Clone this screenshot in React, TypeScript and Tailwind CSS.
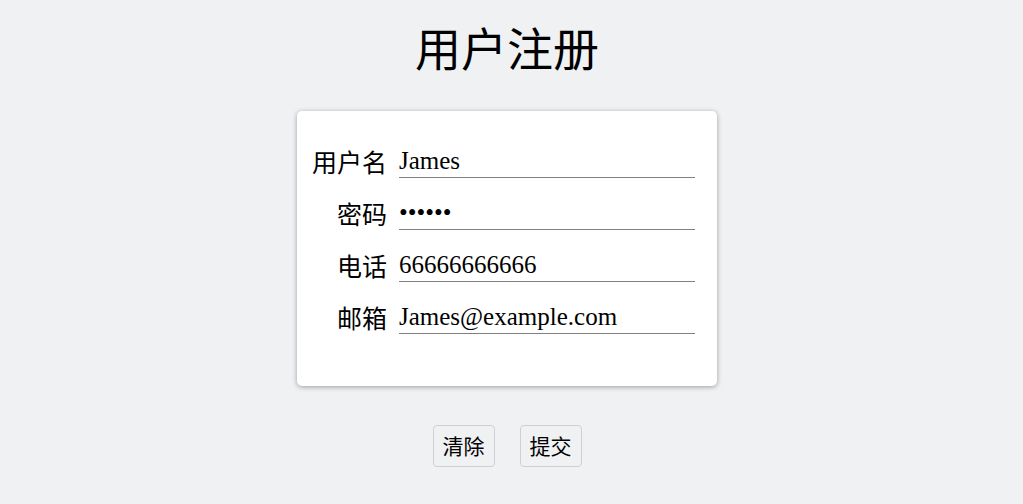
import { useState } from "react"

const fields = [
    { name: "username", label: "用户名", type: "text", value: "James" },
    { name: "password", label: "密码", type: "password", value: "123456" },
    { name: "phone", label: "电话", type: "text", value: "66666666666" },
    { name: "email", label: "邮箱", type: "text", value: "James@example.com" },
]

export default function App() {
    const [forms, setForms] = useState<Record<string, string>>(
        Object.fromEntries(fields.map((f) => [f.name, f.value]))
    )

    const handleOnChange = (e: any) => {
        setForms({ ...forms, [e.target.name]: e.target.value })
    }

    const handleClear = () => {
        setForms(Object.fromEntries(fields.map((f) => [f.name, ""])))
    }

    return <div className="min-h-screen bg-[#f0f1f3] flex flex-col items-center pr-[9px] font-['Noto_Sans_CJK_SC',sans-serif] text-black">
        <h1 className="mt-[13px] text-[46px] leading-[66px]">用户注册</h1>
        <div className="mt-[32px] w-[420px] bg-white rounded-[5px] shadow-[0_1px_5px_rgba(0,0,0,0.35)] pl-[14px] pr-[22px] pt-[37px] pb-[52px]">
            <div className="grid grid-cols-[76px_1fr] gap-x-[12px] gap-y-[22px]">
                {fields.map((f) => (
                    <div key={f.name} className="contents">
                        <label className="text-[25px] leading-[26px] text-right whitespace-nowrap">{f.label}</label>
                        <input
                            name={f.name}
                            type={f.type}
                            value={forms[f.name]}
                            onChange={handleOnChange}
                            className="h-[30px] w-full pb-[3px] border-b border-[#808080] text-[25px] leading-[26px] font-['Liberation_Serif',serif] outline-none bg-transparent"
                        />
                    </div>
                ))}
            </div>
        </div>
        <div className="mt-[39px] flex gap-[25px]">
            <button onClick={handleClear} className="h-[42px] px-[9px] text-[21px] bg-[#f0f1f3] border border-[#cfd0d2] rounded-[4px]">清除</button>
            <button className="h-[42px] px-[9px] text-[21px] bg-[#f0f1f3] border border-[#cfd0d2] rounded-[4px]">提交</button>
        </div>
    </div>
}
